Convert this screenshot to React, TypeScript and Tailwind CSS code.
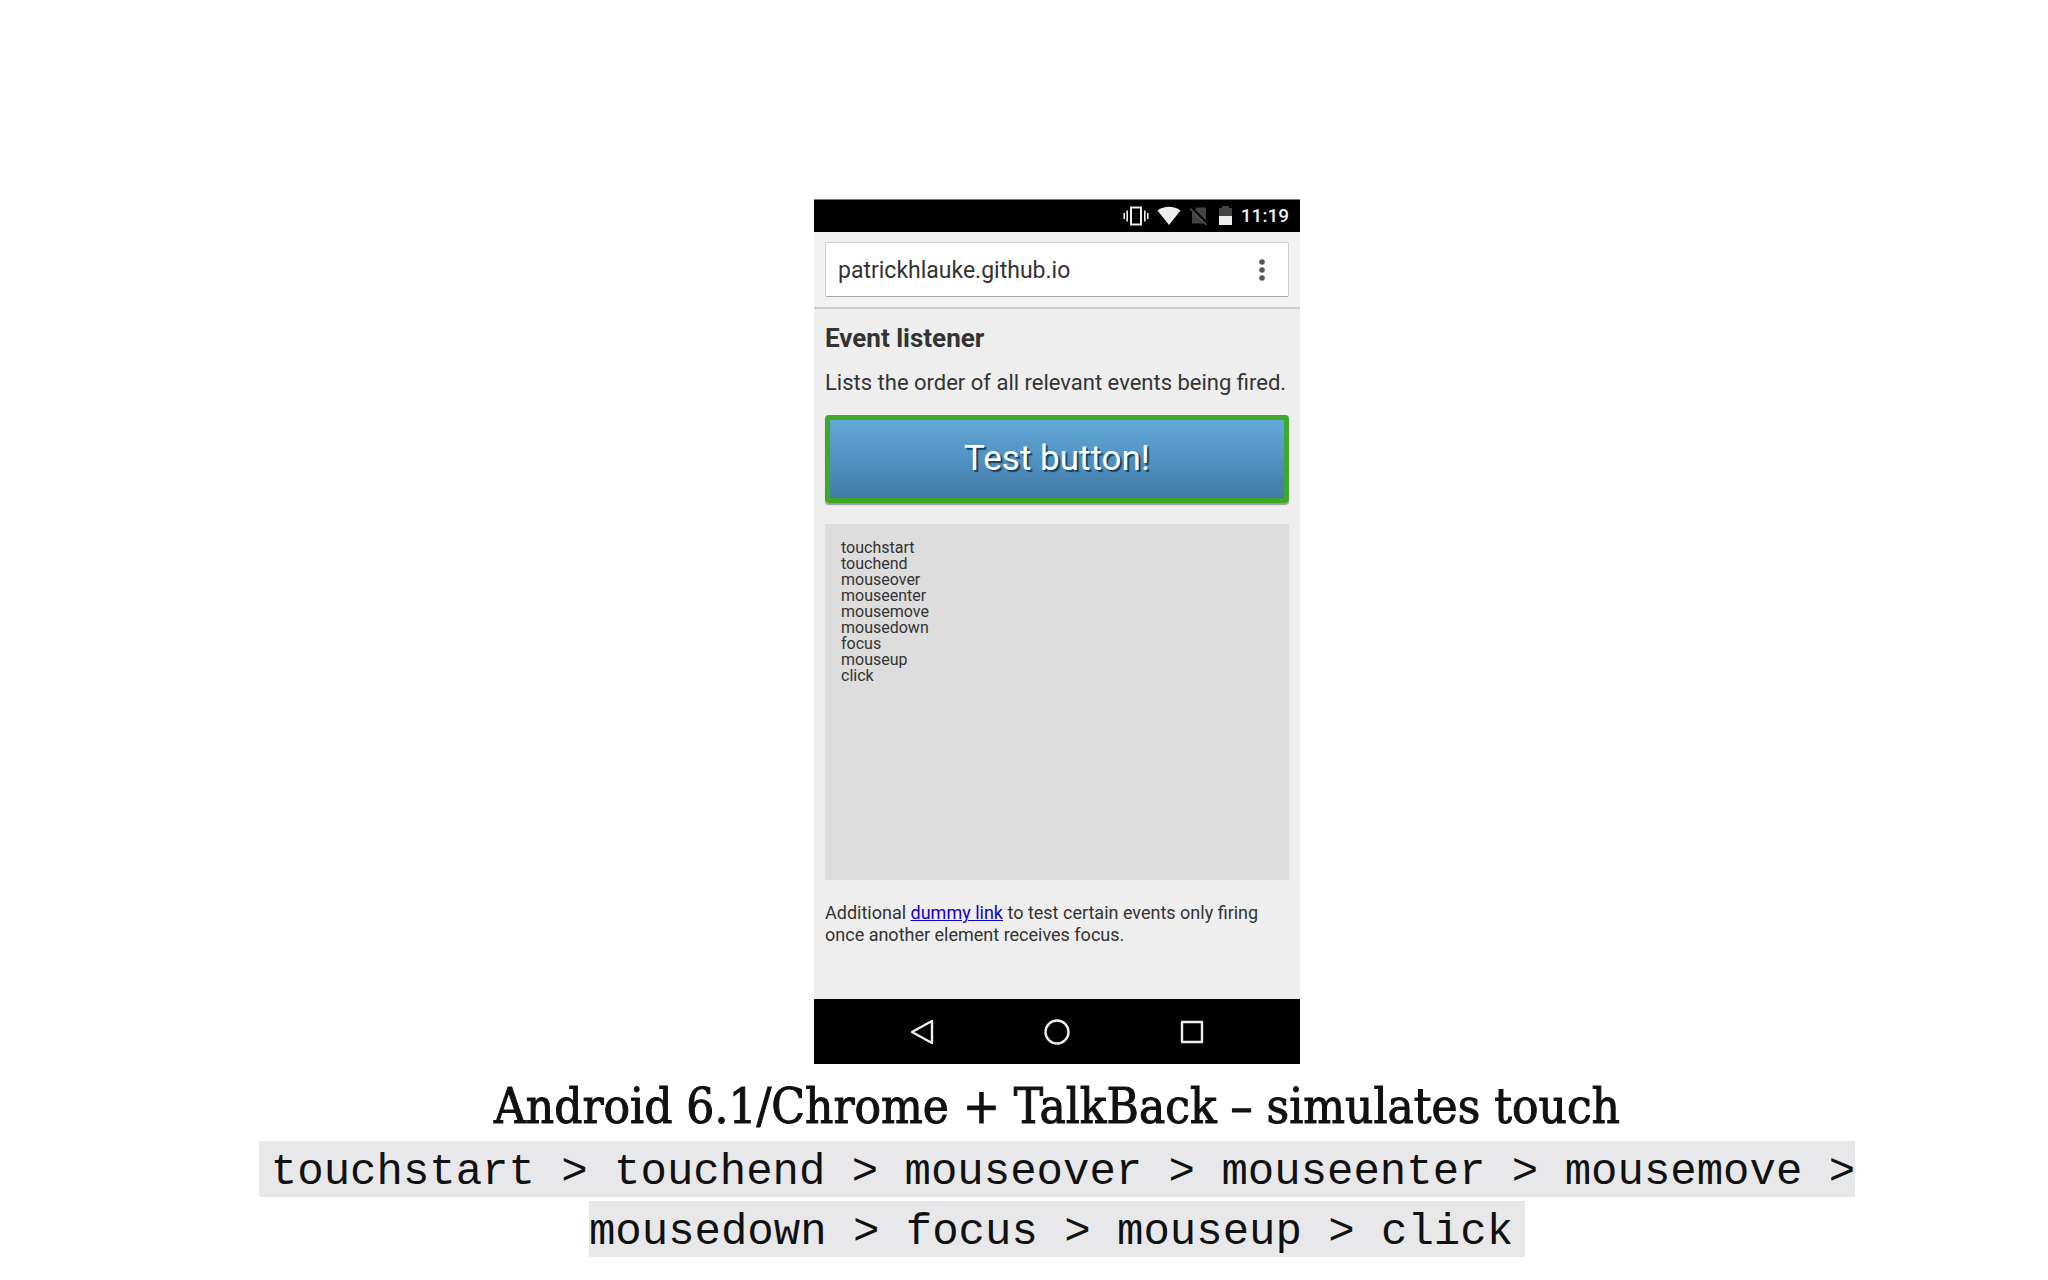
import type {ReactNode} from "react"

const loggedEvents = [
    "touchstart",
    "touchend",
    "mouseover",
    "mouseenter",
    "mousemove",
    "mousedown",
    "focus",
    "mouseup",
    "click",
]

function StatusBar() {
    return (
        <div className="flex h-[33px] items-center justify-end border-t border-[#777] bg-black pr-[11px] text-[#eee]">
            <svg width="26" height="20" viewBox="0 0 26 20" fill="none" stroke="currentColor" className="mr-2">
                <rect x="8" y="1.5" width="10" height="17" strokeWidth="2"/>
                <path d="M1.2 7v6M4.2 4.500v11M21.800 4.500v11M24.800 7v6" strokeWidth="1.600"/>
            </svg>
            <svg width="24" height="20" viewBox="0 0 24 20" fill="currentColor" className="mr-2">
                <path d="M0.500 4.500C7 -0.500 17 -0.500 23.500 4.500L12 19Z"/>
            </svg>
            <svg width="20" height="20" viewBox="0 0 20 20" className="mr-1.5">
                <path d="M8 1.500h9v16h-14v-11z" fill="#444"/>
                <path d="M2 1.500L19 18.500" stroke="#000" strokeWidth="3"/>
                <path d="M1 2.500L17.500 19" stroke="#555" strokeWidth="1.600"/>
            </svg>
            <svg width="20" height="20" viewBox="0 0 20 20" className="mr-1.5">
                <path d="M4 2h3V0h7v2h3v8H4z" fill="#444"/>
                <path d="M4 10h13v9H4z" fill="currentColor"/>
            </svg>
            <span className="text-[19px] font-medium">11:19</span>
        </div>
    )
}

function AddressBar() {
    return (
        <div className="border-b-2 border-[#ccc] bg-[#f2f2f2] px-[11px] py-[10px]">
            <div
                className="flex h-[55px] items-center rounded-xs border border-[#d0d0d0] border-b-[#aaa] bg-white">
                <input
                    aria-label="Address"
                    defaultValue="patrickhlauke.github.io"
                    className="min-w-0 flex-1 pt-1 pl-3 text-[23px] text-[#333] outline-none"
                />
                <button type="button" aria-label="Menu" className="px-[22px]">
                    <svg width="8" height="24" viewBox="0 0 8 24" fill="#555">
                        <circle cx="4" cy="4" r="2.800"/>
                        <circle cx="4" cy="12" r="2.800"/>
                        <circle cx="4" cy="20" r="2.800"/>
                    </svg>
                </button>
            </div>
        </div>
    )
}

function NavButton({label, children}: { label: string; children: ReactNode }) {
    return (
        <button type="button" aria-label={label}>
            <svg width="28" height="28" viewBox="0 0 28 28" fill="none" stroke="#eee" strokeWidth="2.400"
                 strokeLinejoin="round">
                {children}
            </svg>
        </button>
    )
}

function Phone() {
    return (
        <div className="w-full max-w-[486px] bg-[#eee] font-['Roboto',sans-serif] text-[#333]">
            <StatusBar/>
            <AddressBar/>
            <div className="px-[11px] pt-3 pb-[53px]">
                <h2 className="text-[26px] leading-[34px] font-bold">Event listener</h2>
                <p className="mt-[14px] text-[22px] leading-[28px] whitespace-nowrap">
                    Lists the order of all relevant events being fired.
                </p>
                <button
                    type="button"
                    className="mt-[18px] h-[88px] w-full rounded-[4px] border-[5px] border-[#3ea82c] bg-linear-to-b from-[#62a8d6] via-[#5192c3] to-[#427aa5] text-[35px] text-white shadow-[0_2px_1px_#999] [text-shadow:2px_2px_1px_#12405c]"
                >
                    Test button!
                </button>
                <div className="mt-[21px] min-h-[356px] bg-[#ddd] p-4 text-[16px] leading-[16px]">
                    {loggedEvents.map((name) => (
                        <div key={name}>{name}</div>
                    ))}
                </div>
                <p className="mt-[22px] text-[18px] leading-[22px]">
                    Additional <a href="#dummy" className="text-[#1100cc] underline">dummy link</a> to test certain
                    events only firing once another element receives focus.
                </p>
            </div>
            <div className="flex h-[65px] items-center justify-center gap-[107px] bg-black">
                <NavButton label="Back">
                    <path d="M24 3v22L4 14z"/>
                </NavButton>
                <NavButton label="Home">
                    <circle cx="14" cy="14" r="11.500"/>
                </NavButton>
                <NavButton label="Recent apps">
                    <rect x="4" y="4" width="20" height="20"/>
                </NavButton>
            </div>
        </div>
    )
}

export default function App() {
    return (
        <main className="flex min-h-screen flex-col items-center overflow-hidden bg-white pt-[199px] pl-[66px] text-[#111]">
            <Phone/>
            <h1 className="mt-2 text-center font-['Roboto_Slab','DejaVu_Serif_Condensed','DejaVu_Serif',serif] text-[49px] leading-[70px] [-webkit-text-stroke:1px_#111]">
                Android 6.1/Chrome + TalkBack – simulates touch
            </h1>
            <p className="max-w-[1640px] text-center font-['Liberation_Mono',monospace] text-[44px] leading-[60px]">
                <code className="bg-[#e8e8ea] px-3 pt-[6px] font-['Liberation_Mono',monospace]">
                    {loggedEvents.join(" > ")}
                </code>
            </p>
        </main>
    )
}
